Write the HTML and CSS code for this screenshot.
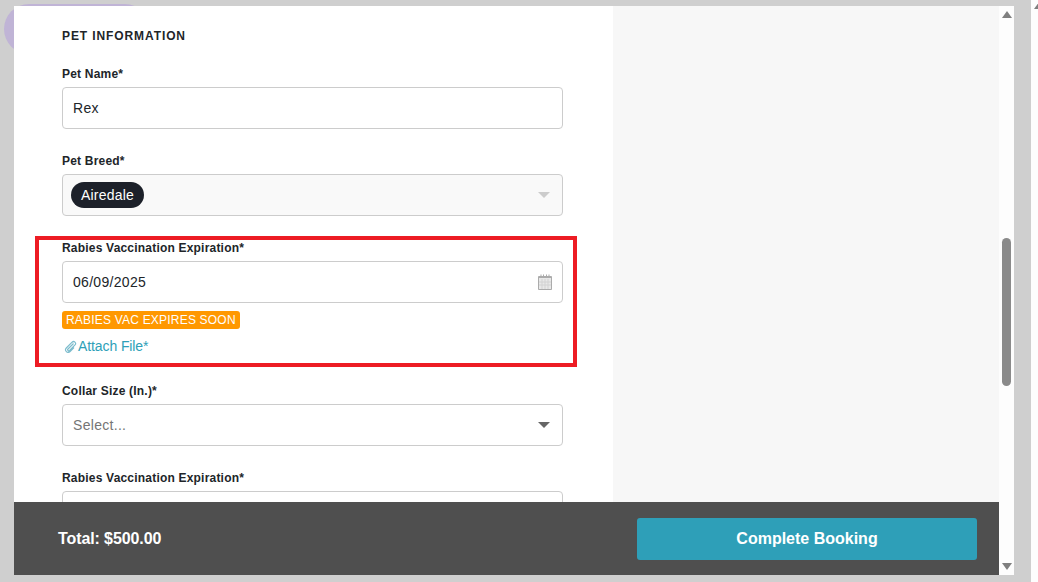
FILE: index.html
```html
<!DOCTYPE html>
<html lang="en">
	<head>
		<meta charset="UTF-8" />
		<meta name="viewport" content="width=device-width, initial-scale=1.0" />
		<title>Pet Information</title>
		<link rel="stylesheet" href="styles.css">
	</head>
	<body>
		<div class="avatar-pill"></div>

		<div class="modal">
			<div class="modal-main">
				<div class="modal-body">
					<form class="pet-form">
						<h2>Pet Information</h2>

						<div class="field">
							<label>Pet Name*</label>
							<div class="input">Rex</div>
						</div>

						<div class="field">
							<label>Pet Breed*</label>
							<div class="input input-disabled">
								<span class="tag">Airedale</span>
								<span class="caret caret-light"></span>
							</div>
						</div>

						<div class="field">
							<label>Rabies Vaccination Expiration*</label>
							<div class="input">
								06/09/2025
								<svg class="calendar" width="14" height="16" viewBox="0 0 14 16">
									<path d="M.5 2.500h13v13H.5z" fill="#e8e8e8" stroke="#ababab" />
									<path d="M1 2h12v2H1z" fill="#ababab" />
									<path d="M3 .5v2M5.500 .5v2M8.500 .5v2M11 .5v2" stroke="#ababab" />
									<path d="M4 5v10M7 5v10M10 5v10M1 8h12M1 11h12" stroke="#d2d2d2" />
								</svg>
							</div>
							<div class="badge">RABIES VAC EXPIRES SOON</div>
							<a class="attach" href="#">
								<svg width="13" height="13" viewBox="0 0 13 13" fill="none" stroke="#7cbccd" stroke-width="1.200">
									<path d="M9.500 3.500 4 9c-1 1.100.5 2.500 1.600 1.500l5.400-5.600c1.800-2-1-4.500-2.900-2.700L2.300 8c-2.300 2.600 1.200 5.800 3.800 3.500L10 7.500" />
								</svg>Attach File*
							</a>
						</div>

						<div class="field">
							<label>Collar Size (In.)*</label>
							<div class="input input-placeholder">
								Select...
								<span class="caret"></span>
							</div>
						</div>

						<div class="field">
							<label>Rabies Vaccination Expiration*</label>
							<div class="input"></div>
						</div>
					</form>
					<div class="side-panel"></div>
				</div>

				<div class="modal-footer">
					<span class="total">Total: $500.00</span>
					<button type="button">Complete Booking</button>
				</div>
			</div>

			<div class="scrollbar">
				<span class="arrow-up"></span>
				<span class="thumb"></span>
				<span class="arrow-down"></span>
			</div>

			<!-- highlight drawn on top of the form -->
			<div class="highlight"></div>
		</div>

		<div class="page-scrollbar">
			<span class="arrow-up"></span>
		</div>
	</body>
</html>
```

FILE: styles.css
```css
* {
	box-sizing: border-box;
}

html,
body {
	height: 100%;
}

body {
	margin: 0;
	display: flex;
	align-items: flex-start;
	overflow: hidden;
	position: relative;
	background-color: #cfcfcf;
	font-family: "Liberation Sans", Arial, sans-serif;
	color: #212529;
}

.avatar-pill {
	position: absolute;
	top: 4px;
	left: 4px;
	width: 146px;
	height: 50px;
	border-radius: 25px;
	background-color: #c0b4d6;
}

.modal {
	position: relative;
	flex: none;
	display: flex;
	width: 1000px;
	height: 569px;
	margin: 6px 17px 0 14px;
	background-color: #ffffff;
}

.modal-main {
	display: flex;
	flex-direction: column;
	width: 985px;
}

.modal-body {
	flex: 1;
	display: flex;
	min-height: 0;
	overflow: hidden;
}

.pet-form {
	width: 599px;
	padding: 23px 50px 0 48px;
}

.side-panel {
	flex: 1;
	background-color: #f7f7f7;
}

h2 {
	margin: 0 0 24px;
	font-size: 12px;
	line-height: 14px;
	letter-spacing: 0.9px;
	text-transform: uppercase;
	color: #212529;
}

.field {
	margin-bottom: 25px;
}

label {
	display: block;
	margin-bottom: 6px;
	font-size: 12px;
	line-height: 14px;
	font-weight: bold;
	letter-spacing: 0.2px;
}

.input {
	display: flex;
	align-items: center;
	justify-content: space-between;
	height: 42px;
	padding: 0 10px;
	border: 1px solid #cccccc;
	border-radius: 4px;
	font-size: 14px;
	letter-spacing: 0.3px;
}

.input-disabled {
	padding-left: 8px;
	background-color: #f9f9f9;
}

.input-placeholder {
	color: #757575;
}

.tag {
	padding: 0 10px;
	border-radius: 13px;
	background-color: #1c2029;
	color: #ffffff;
	line-height: 26px;
	letter-spacing: 0.2px;
}

.caret {
	margin-right: 2px;
	border-top: 6px solid #666666;
	border-left: 6px solid transparent;
	border-right: 6px solid transparent;
}

.caret-light {
	border-top-color: #cccccc;
}

.badge {
	display: inline-block;
	margin-top: 8px;
	padding: 0 4px;
	border-radius: 3px;
	background-color: #ff9800;
	color: #ffffff;
	font-size: 12px;
	line-height: 18px;
	letter-spacing: 0.2px;
}

.attach {
	display: flex;
	align-items: center;
	gap: 1px;
	margin: 8px 0 29px 2px;
	color: #2e9fb8;
	font-size: 14px;
	line-height: 18px;
	letter-spacing: -0.1px;
	text-decoration: none;
}

.modal-footer {
	flex: none;
	display: flex;
	align-items: center;
	justify-content: space-between;
	height: 73px;
	padding: 0 22px 0 44px;
	background-color: #4f4f4f;
	color: #ffffff;
}

.total {
	font-size: 16px;
	font-weight: bold;
	letter-spacing: -0.1px;
}

button {
	width: 340px;
	height: 42px;
	border: none;
	border-radius: 3px;
	background-color: #2e9fb8;
	color: #ffffff;
	font-family: inherit;
	font-size: 16px;
	font-weight: bold;
}

.scrollbar {
	width: 15px;
	display: flex;
	flex-direction: column;
	align-items: center;
	padding: 5px 0;
	background-color: #fdfdfd;
}

.thumb {
	width: 9px;
	height: 148px;
	margin-top: 220px;
	border-radius: 5px;
	background-color: #8a8a8a;
}

.arrow-up {
	border-bottom: 7px solid #7f7f7f;
	border-left: 5px solid transparent;
	border-right: 5px solid transparent;
}

.arrow-down {
	margin-top: auto;
	border-top: 7px solid #7f7f7f;
	border-left: 5px solid transparent;
	border-right: 5px solid transparent;
}

.highlight {
	position: absolute;
	top: 230px;
	left: 21px;
	width: 542px;
	height: 131px;
	border: 4px solid #ed1c24;
}

.page-scrollbar {
	flex: none;
	display: flex;
	flex-direction: column;
	align-items: center;
	width: 15px;
	height: 100%;
	padding-top: 2px;
	background-color: #fdfdfd;
}
```
